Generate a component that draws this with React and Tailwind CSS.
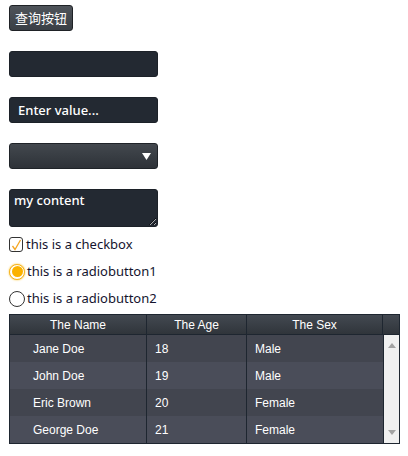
import React from 'react';

const rows = [
  { name: 'Jane Doe', age: 18, sex: 'Male' },
  { name: 'John Doe', age: 19, sex: 'Male' },
  { name: 'Eric Brown', age: 20, sex: 'Female' },
  { name: 'George Doe', age: 21, sex: 'Female' },
];

const font = { fontFamily: '"Noto Sans", "Noto Sans CJK SC", sans-serif' };

const App = () => {
  return (
    <div className="w-[408px] h-[456px] bg-white pl-[9px] pt-[5px] text-[13px]" style={font}>
      <button className="h-[26px] px-[5px] rounded-[3px] border border-[#1f2226] bg-gradient-to-b from-[#4f545a] to-[#3a3f45] text-white text-[13px] leading-none">
        查询按钮
      </button>

      <div className="mt-[20px] w-[149px] h-[26px] rounded-[3px] bg-[#232932] border border-[#1c2128]" />

      <input
        readOnly
        value="Enter value..."
        className="block mt-[20px] w-[149px] h-[26px] rounded-[3px] bg-[#232932] border border-[#1c2128] px-[8px] text-white text-[13px] font-medium outline-none"
      />

      <div className="mt-[20px] w-[149px] h-[26px] rounded-[3px] border border-[#1f2328] bg-gradient-to-b from-[#43484e] via-[#383d43] to-[#2e3238] flex items-center justify-end pr-[6px]">
        <svg width="9" height="7" viewBox="0 0 9 7">
          <path d="M0 0 H9 L4.5 7 Z" fill="#fff" />
        </svg>
      </div>

      <textarea
        readOnly
        value="my content"
        className="block mt-[20px] w-[149px] h-[38px] rounded-[3px] bg-[#232932] border border-[#1c2128] px-[4px] py-[1px] text-white text-[13px] font-medium leading-[18px] outline-none"
      />

      <div className="mt-[4px] flex flex-col text-[#14142e]">
        <label className="h-[27px] flex items-center gap-[3px]">
          <span className="w-[14px] h-[15px] rounded-[3px] border border-[#333] bg-white flex items-center justify-center">
            <svg width="11" height="12" viewBox="0 0 11 12">
              <path d="M1.5 7 L4 10.5 L9.5 1" fill="none" stroke="#f5a623" strokeWidth="1.3" />
            </svg>
          </span>
          <span>this is a checkbox</span>
        </label>
        <label className="h-[27px] flex items-center gap-[2px]">
          <span className="w-[16px] h-[16px] rounded-full border border-[#f6b21a] bg-white flex items-center justify-center shadow-[0_0_2px_#fbbf24]">
            <span className="w-[11px] h-[11px] rounded-full bg-[#fbb200]" />
          </span>
          <span>this is a radiobutton1</span>
        </label>
        <label className="h-[27px] flex items-center gap-[2px]">
          <span className="w-[16px] h-[16px] rounded-full border border-[#333] bg-white" />
          <span>this is a radiobutton2</span>
        </label>
      </div>

      <div
        className="mt-[2px] w-[391px] border border-[#1e2630] text-[12px] text-white"
        style={{ fontFamily: '"Liberation Sans", Arial, sans-serif' }}
      >
        <div className="flex h-[20px] bg-gradient-to-b from-[#434951] to-[#30353b] border-b border-[#1e2630]">
          <div className="w-[137px] border-r border-[#1e2630] flex items-center justify-center">The Name</div>
          <div className="w-[100px] border-r border-[#1e2630] flex items-center justify-center">The Age</div>
          <div className="w-[136px] border-r border-[#1e2630] flex items-center justify-center">The Sex</div>
          <div className="flex-1" />
        </div>
        <div className="flex">
          <div className="w-[373px]">
            {rows.map((r, i) => (
              <div key={r.name} className={`flex h-[27px] ${i % 2 ? 'bg-[#4a4d59]' : 'bg-[#42454f]'}`}>
                <div className="w-[137px] border-r border-[#1e2630] pl-[23px] flex items-center">{r.name}</div>
                <div className="w-[100px] border-r border-[#1e2630] pl-[8px] flex items-center">{r.age}</div>
                <div className="w-[136px] pl-[8px] flex items-center">{r.sex}</div>
              </div>
            ))}
          </div>
          <div className="flex-1 bg-[#f0f0f0] border-l border-[#1e2630] flex flex-col items-center justify-between py-[8px]">
            <svg width="8" height="5" viewBox="0 0 8 5"><path d="M0 5 L4 0 L8 5 Z" fill="#a3a3a3" /></svg>
            <svg width="8" height="5" viewBox="0 0 8 5"><path d="M0 0 L8 0 L4 5 Z" fill="#a3a3a3" /></svg>
          </div>
        </div>
      </div>
    </div>
  );
};

export default App;
